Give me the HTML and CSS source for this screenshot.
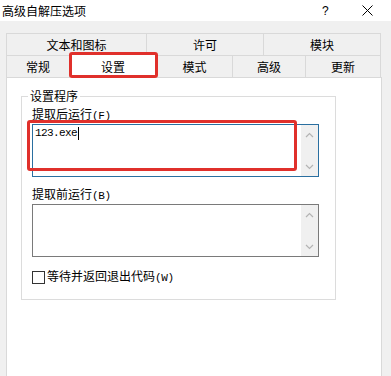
FILE: index.html
```html
<!DOCTYPE html>
<html lang="zh-CN">
<head>
    <meta charset="UTF-8">
    <title>高级自解压选项</title>
    <link rel="stylesheet" href="styles.css">
</head>
<body>
    <!-- タイトルバー -->
    <div class="titlebar">
        <span class="title">高级自解压选项</span>
        <span class="help">?</span>
        <svg class="close" width="11" height="11" viewBox="0 0 11 11">
            <path d="M0.5 0.5 L10.5 10.5 M10.5 0.5 L0.5 10.5" stroke="#000" stroke-width="1" fill="none"/>
        </svg>
    </div>

    <div class="dialog">
        <!-- タブ -->
        <div class="tabs">
            <div class="tab-row">
                <div class="tab w141 first">文本和图标</div>
                <div class="tab w117">许可</div>
                <div class="tab w116">模块</div>
            </div>
            <div class="tab-row">
                <div class="tab w64 first">常规</div>
                <div class="tab w87 active">设置</div>
                <div class="tab w76">模式</div>
                <div class="tab w73">高级</div>
                <div class="tab w74">更新</div>
            </div>
        </div>

        <div class="panel">
            <fieldset class="group">
                <legend>设置程序</legend>

                <label class="field-label">提取后运行<span class="mono">(F)</span></label>
                <div class="textbox focused">
                    <div class="textbox-text">123.exe<span class="caret"></span></div>
                    <div class="scroll">
                        <svg width="9" height="6" viewBox="0 0 9 6"><path d="M1 5 L4.5 1.5 L8 5" stroke="#b4b4b4" stroke-width="1.2" fill="none"/></svg>
                        <svg width="9" height="6" viewBox="0 0 9 6"><path d="M1 1 L4.5 4.5 L8 1" stroke="#b4b4b4" stroke-width="1.2" fill="none"/></svg>
                    </div>
                </div>

                <label class="field-label second">提取前运行<span class="mono">(B)</span></label>
                <div class="textbox">
                    <div class="textbox-text"></div>
                    <div class="scroll">
                        <svg width="9" height="6" viewBox="0 0 9 6"><path d="M1 5 L4.5 1.5 L8 5" stroke="#b4b4b4" stroke-width="1.2" fill="none"/></svg>
                        <svg width="9" height="6" viewBox="0 0 9 6"><path d="M1 1 L4.5 4.5 L8 1" stroke="#b4b4b4" stroke-width="1.2" fill="none"/></svg>
                    </div>
                </div>

                <div class="check-row">
                    <span class="checkbox"></span>
                    <span>等待并返回退出代码<span class="mono">(W)</span></span>
                </div>
            </fieldset>
        </div>
    </div>

    <!-- 赤い強調枠 -->
    <div class="mark mark-tab"></div>
    <div class="mark mark-field"></div>
</body>
</html>
```

FILE: styles.css
```css
body {
    margin: 0;
    width: 391px;
    height: 376px;
    overflow: hidden;
    background-color: #f0f0f0;
    font-family: "Noto Sans CJK SC", sans-serif;
    font-size: 12px;
    color: #000;
    position: relative;
}
.titlebar {
    height: 21px;
    background-color: #fff;
    display: flex;
    align-items: center;
    padding-left: 2px;
}
.title {
    flex: 1;
    font-size: 12px;
    line-height: 14px;
}
.help {
    width: 10px;
    margin-right: 30px;
    font-family: "Liberation Sans", sans-serif;
    font-size: 12px;
}
.close {
    margin-right: 18px;
}
.dialog {
    padding: 12px 0 0 6px;
}
.tabs {
    width: 375px;
}
.tab-row {
    display: flex;
    height: 22px;
}
.tab {
    box-sizing: border-box;
    height: 22px;
    border-top: 1px solid #d9d9d9;
    border-right: 1px solid #d9d9d9;
    display: flex;
    align-items: center;
    justify-content: center;
    line-height: 14px;
}
.tab.first {
    border-left: 1px solid #d9d9d9;
}
.tab.active {
    background-color: #fff;
    height: 25px;
    margin-top: -2px;
    position: relative;
    z-index: 2;
    padding-top: 2px;
}
.w141 { width: 141px; }
.w117 { width: 117px; }
.w116 { width: 117px; }
.w64 { width: 64px; }
.w87 { width: 87px; }
.w76 { width: 76px; }
.w73 { width: 73px; }
.w74 { width: 75px; }
.panel {
    box-sizing: border-box;
    width: 376px;
    height: 300px;
    background-color: #fff;
    border: 1px solid #d9d9d9;
    position: relative;
    z-index: 1;
    padding-top: 11px;
}
.group {
    box-sizing: border-box;
    width: 315px;
    margin: 0 0 0 14px;
    padding: 0 16px 14px 10px;
    border: 1px solid #dcdcdc;
}
.group legend {
    padding: 0 2px;
    margin-left: -4px;
    line-height: 14px;
}
.field-label {
    display: block;
    line-height: 15px;
    margin-top: 3px;
}
.field-label.second {
    margin-top: 9px;
}
.mono {
    font-family: "Liberation Mono", monospace;
    font-size: 11px;
    letter-spacing: -0.3px;
}
.textbox {
    box-sizing: border-box;
    width: 287px;
    height: 53px;
    border: 1px solid #7a7a7a;
    display: flex;
}
.textbox.focused {
    border-color: #2a6fa0;
}
.textbox-text {
    flex: 1;
    padding: 2px 2px;
    font-family: "Liberation Mono", monospace;
    font-size: 11px;
    letter-spacing: -0.6px;
    line-height: 13px;
    display: flex;
    align-items: flex-start;
}
.caret {
    display: inline-block;
    width: 1px;
    height: 13px;
    background-color: #000;
    margin-left: 1px;
}
.scroll {
    width: 17px;
    background-color: #f0f0f0;
    display: flex;
    flex-direction: column;
    align-items: center;
    justify-content: space-between;
    padding: 7px 0 6px;
}
.check-row {
    display: flex;
    align-items: center;
    gap: 2px;
    margin-top: 12px;
    line-height: 14px;
}
.checkbox {
    box-sizing: border-box;
    width: 13px;
    height: 13px;
    border: 1px solid #333;
    background-color: #fff;
}
.mark {
    position: absolute;
    box-sizing: border-box;
    border: 3px solid #e0302b;
    border-radius: 3px;
    z-index: 5;
}
.mark-tab {
    left: 69px;
    top: 52px;
    width: 89px;
    height: 26px;
}
.mark-field {
    left: 27px;
    top: 120px;
    width: 270px;
    height: 51px;
}
```
